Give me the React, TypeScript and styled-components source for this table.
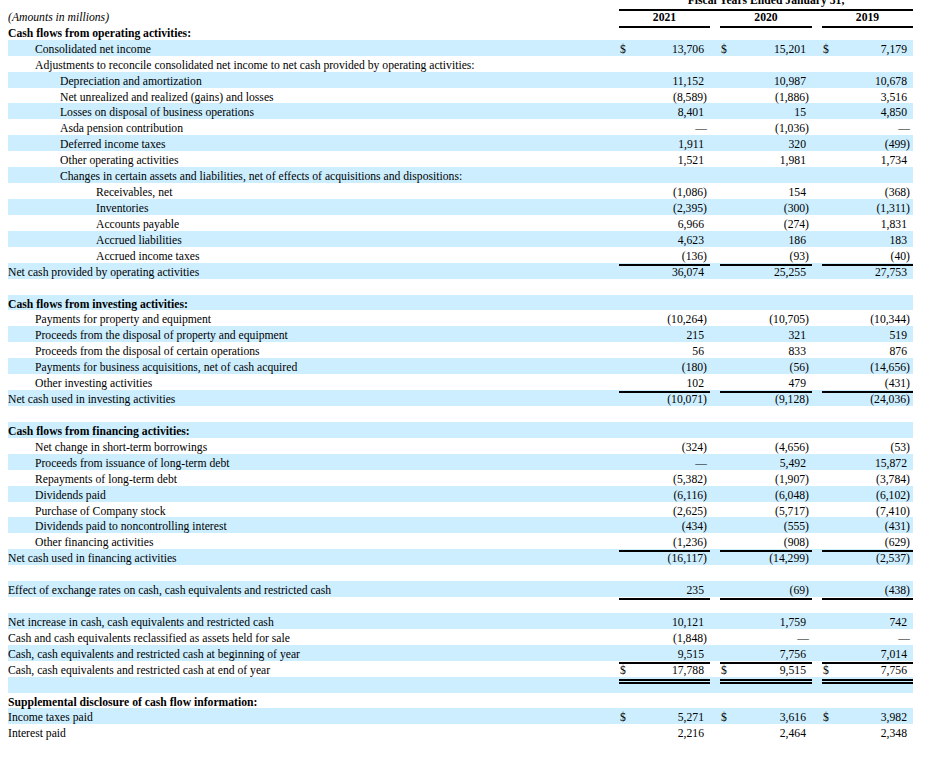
import React from 'react';
import styled, { createGlobalStyle } from 'styled-components';

const ROW_H = 15.93;

type Rule = 'single' | 'double';

interface Line {
  label: string;
  level?: number;
  bold?: boolean;
  values?: [string, string, string];
  dollar?: boolean;
  rule?: Rule;
}

const lines: Line[] = [
  { label: 'Cash flows from operating activities:', bold: true },
  { label: 'Consolidated net income', level: 1, values: ['13,706', '15,201', '7,179'], dollar: true },
  { label: 'Adjustments to reconcile consolidated net income to net cash provided by operating activities:', level: 1 },
  { label: 'Depreciation and amortization', level: 2, values: ['11,152', '10,987', '10,678'] },
  { label: 'Net unrealized and realized (gains) and losses', level: 2, values: ['(8,589)', '(1,886)', '3,516'] },
  { label: 'Losses on disposal of business operations', level: 2, values: ['8,401', '15', '4,850'] },
  { label: 'Asda pension contribution', level: 2, values: ['—', '(1,036)', '—'] },
  { label: 'Deferred income taxes', level: 2, values: ['1,911', '320', '(499)'] },
  { label: 'Other operating activities', level: 2, values: ['1,521', '1,981', '1,734'] },
  { label: 'Changes in certain assets and liabilities, net of effects of acquisitions and dispositions:', level: 2 },
  { label: 'Receivables, net', level: 3, values: ['(1,086)', '154', '(368)'] },
  { label: 'Inventories', level: 3, values: ['(2,395)', '(300)', '(1,311)'] },
  { label: 'Accounts payable', level: 3, values: ['6,966', '(274)', '1,831'] },
  { label: 'Accrued liabilities', level: 3, values: ['4,623', '186', '183'] },
  { label: 'Accrued income taxes', level: 3, values: ['(136)', '(93)', '(40)'], rule: 'single' },
  { label: 'Net cash provided by operating activities', values: ['36,074', '25,255', '27,753'] },
  { label: '' },
  { label: 'Cash flows from investing activities:', bold: true },
  { label: 'Payments for property and equipment', level: 1, values: ['(10,264)', '(10,705)', '(10,344)'] },
  { label: 'Proceeds from the disposal of property and equipment', level: 1, values: ['215', '321', '519'] },
  { label: 'Proceeds from the disposal of certain operations', level: 1, values: ['56', '833', '876'] },
  { label: 'Payments for business acquisitions, net of cash acquired', level: 1, values: ['(180)', '(56)', '(14,656)'] },
  { label: 'Other investing activities', level: 1, values: ['102', '479', '(431)'], rule: 'single' },
  { label: 'Net cash used in investing activities', values: ['(10,071)', '(9,128)', '(24,036)'] },
  { label: '' },
  { label: 'Cash flows from financing activities:', bold: true },
  { label: 'Net change in short-term borrowings', level: 1, values: ['(324)', '(4,656)', '(53)'] },
  { label: 'Proceeds from issuance of long-term debt', level: 1, values: ['—', '5,492', '15,872'] },
  { label: 'Repayments of long-term debt', level: 1, values: ['(5,382)', '(1,907)', '(3,784)'] },
  { label: 'Dividends paid', level: 1, values: ['(6,116)', '(6,048)', '(6,102)'] },
  { label: 'Purchase of Company stock', level: 1, values: ['(2,625)', '(5,717)', '(7,410)'] },
  { label: 'Dividends paid to noncontrolling interest', level: 1, values: ['(434)', '(555)', '(431)'] },
  { label: 'Other financing activities', level: 1, values: ['(1,236)', '(908)', '(629)'], rule: 'single' },
  { label: 'Net cash used in financing activities', values: ['(16,117)', '(14,299)', '(2,537)'] },
  { label: '' },
  { label: 'Effect of exchange rates on cash, cash equivalents and restricted cash', values: ['235', '(69)', '(438)'], rule: 'single' },
  { label: '' },
  { label: 'Net increase in cash, cash equivalents and restricted cash', values: ['10,121', '1,759', '742'] },
  { label: 'Cash and cash equivalents reclassified as assets held for sale', values: ['(1,848)', '—', '—'] },
  { label: 'Cash, cash equivalents and restricted cash at beginning of year', values: ['9,515', '7,756', '7,014'], rule: 'single' },
  { label: 'Cash, cash equivalents and restricted cash at end of year', values: ['17,788', '9,515', '7,756'], dollar: true, rule: 'double' },
  { label: '' },
  { label: 'Supplemental disclosure of cash flow information:', bold: true },
  { label: 'Income taxes paid', values: ['5,271', '3,616', '3,982'], dollar: true },
  { label: 'Interest paid', values: ['2,216', '2,464', '2,348'] },
];

const indent = [0, 27, 52, 88];

const GlobalStyle = createGlobalStyle`
  html, body {
    margin: 0;
    padding: 0;
    overflow: hidden;
    background: #ffffff;
  }
  body {
    padding: 0 8px;
    font-family: "Liberation Serif", "Times New Roman", serif;
    color: #000000;
  }
`;

const Statement = styled.div`
  width: 905px;
  margin-top: -8px;
  font-size: 11.67px;
  line-height: ${ROW_H}px;
`;

const Row = styled.div<{ $shaded?: boolean }>`
  display: grid;
  grid-template-columns: 1fr 91px 92px 91px;
  column-gap: 10px;
  height: ${ROW_H}px;
  background: ${(p) => (p.$shaded ? '#cceeff' : 'transparent')};
`;

const Label = styled.div<{ $level: number; $bold?: boolean; $italic?: boolean }>`
  padding: 2px 0 0 ${(p) => indent[p.$level]}px;
  font-weight: ${(p) => (p.$bold ? 700 : 400)};
  font-style: ${(p) => (p.$italic ? 'italic' : 'normal')};
  white-space: nowrap;
`;

const FiscalHeading = styled.div`
  grid-column: 2 / span 3;
  box-sizing: border-box;
  height: 100%;
  padding-top: 1px;
  text-align: center;
  font-weight: 700;
  border-bottom: 2px solid #000;
  white-space: nowrap;
`;

const YearHeading = styled.div`
  box-sizing: border-box;
  height: 100%;
  padding-top: 2px;
  text-align: center;
  font-weight: 700;
  border-bottom: 2px solid #000;
`;

const Amount = styled.div<{ $rule?: Rule }>`
  display: flex;
  justify-content: space-between;
  align-items: flex-start;
  box-sizing: border-box;
  height: ${(p) => (p.$rule === 'single' ? 'calc(100% - 1px)' : '100%')};
  padding: 2px 6px 0 1px;
  white-space: nowrap;
  border-bottom: ${(p) =>
    p.$rule === 'single' ? '2px solid #000' : p.$rule === 'double' ? '5px double #000' : 'none'};
`;

const Figure = styled.span<{ $hang?: boolean }>`
  margin-left: auto;
  margin-right: ${(p) => (p.$hang ? '-3px' : '0')};
`;

const Dollar = styled.span``;

function AmountCell({ value, dollar, rule }: { value: string; dollar?: boolean; rule?: Rule }) {
  const hang = value.startsWith('(') || value === '—';
  return (
    <Amount $rule={rule}>
      {dollar && <Dollar>$</Dollar>}
      <Figure $hang={hang}>{value}</Figure>
    </Amount>
  );
}

export default function App() {
  return (
    <>
      <GlobalStyle />
      <Statement>
        <Row>
          <Label $level={0} />
          <FiscalHeading>Fiscal Years Ended January 31,</FiscalHeading>
        </Row>
        <Row>
          <Label $level={0} $italic>
            (Amounts in millions)
          </Label>
          <YearHeading>2021</YearHeading>
          <YearHeading>2020</YearHeading>
          <YearHeading>2019</YearHeading>
        </Row>
        {lines.map((line, i) => (
          <Row key={i} $shaded={i % 2 === 1}>
            <Label $level={line.level ?? 0} $bold={line.bold}>
              {line.label}
            </Label>
            {line.values
              ? line.values.map((v, j) => (
                  <AmountCell key={j} value={v} dollar={line.dollar} rule={line.rule} />
                ))
              : null}
          </Row>
        ))}
      </Statement>
    </>
  );
}
